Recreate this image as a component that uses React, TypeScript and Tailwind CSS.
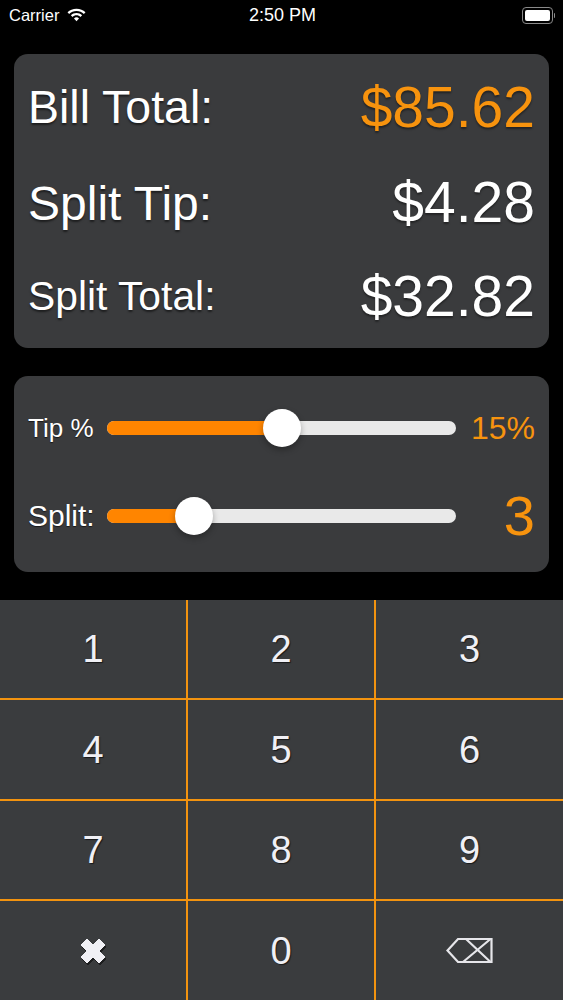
const FONT = "font-['Liberation_Sans',Arial,sans-serif]";

const totals = [
  { label: 'Bill Total:', value: '$85.62', labelSize: 'text-[46.5px]', orange: true, height: 'h-[96px]' },
  { label: 'Split Tip:', value: '$4.28', labelSize: 'mt-[3px] text-[48px]', orange: false, height: 'h-[94px]' },
  { label: 'Split Total:', value: '$32.82', labelSize: 'text-[40.8px]', orange: false, height: 'h-[94px]' },
];

const keys = ['1', '2', '3', '4', '5', '6', '7', '8', '9'];

const KEY_TEXT = 'flex items-center justify-center bg-[#3a3c3e] pt-[1px] text-[38px] text-[#f0f0f5] [text-shadow:1px_1px_1px_rgba(0,0,0,0.6)]';

function WifiIcon() {
  return (
    <svg width="19" height="14" viewBox="0 0 18 13" fill="#fff">
      <path d="M9 0.5C5.6 0.5 2.6 1.8 0.5 3.9L2 5.5C3.8 3.7 6.3 2.7 9 2.7C11.7 2.7 14.2 3.7 16 5.5L17.5 3.9C15.4 1.8 12.4 0.5 9 0.5Z" />
      <path d="M9 4.6C7 4.6 5.1 5.4 3.7 6.8L5.2 8.4C6.2 7.4 7.5 6.8 9 6.8C10.5 6.8 11.8 7.4 12.8 8.4L14.3 6.8C12.9 5.4 11 4.6 9 4.6Z" />
      <path d="M9 8.6C8.1 8.6 7.2 9 6.6 9.7L9 12.5L11.4 9.7C10.8 9 9.9 8.6 9 8.6Z" />
    </svg>
  );
}

function StatusBar() {
  return (
    <div className="relative flex h-[30px] shrink-0 items-center justify-between pl-[9px] pr-[8px] text-white">
      <div className="flex items-center gap-[8px]">
        <span className="text-[16.5px]">Carrier</span>
        <WifiIcon />
      </div>
      <span className="absolute left-[2px] right-0 text-center text-[18px]">2:50 PM</span>
      <div className="flex items-center gap-[1px]">
        <div className="h-[17px] w-[31px] rounded-[4px] border border-[#8a8a8a] p-[2px]">
          <div className="h-full w-full rounded-[2px] bg-white" />
        </div>
        <div className="h-[5px] w-[1.5px] rounded-r-full bg-[#8a8a8a]" />
      </div>
    </div>
  );
}

function SliderRow({ label, value, percent, labelClass, valueClass }: { label: string; value: string; percent: number; labelClass: string; valueClass: string }) {
  return (
    <div className="flex h-[88px] items-center">
      <span className={`w-[79px] whitespace-nowrap leading-none text-white [text-shadow:0_1px_1px_rgba(0,0,0,0.6)] ${labelClass}`}>{label}</span>
      <div className="relative h-[14px] w-[349px] rounded-full bg-[#e9e9e9]">
        <div className="h-full rounded-full bg-[#ff8500]" style={{ width: `${percent}%` }} />
        <div
          className="absolute top-1/2 h-[38px] w-[38px] -translate-x-1/2 -translate-y-1/2 rounded-full bg-white shadow-[0_3px_6px_rgba(0,0,0,0.3)]"
          style={{ left: `${percent}%` }}
        />
      </div>
      <span className={`flex-1 text-right leading-none text-[#f7930e] ${valueClass}`}>{value}</span>
    </div>
  );
}

export default function App() {
  return (
    <div className={`flex h-[1000px] w-[563px] flex-col overflow-hidden bg-black ${FONT}`}>
      <StatusBar />

      <div className="mx-[14px] mt-[24px] flex h-[294px] shrink-0 flex-col justify-center rounded-[14px] bg-[#3a3b3d] px-[14px]">
        {totals.map((row) => (
          <div key={row.label} className={`flex items-center justify-between ${row.height}`}>
            <span className={`${row.labelSize} leading-none text-white [text-shadow:0_2px_2px_rgba(0,0,0,0.5)]`}>{row.label}</span>
            <span className={`text-[57px] leading-none [text-shadow:0_2px_2px_rgba(0,0,0,0.4)] ${row.orange ? 'text-[#f7930e]' : 'text-white'}`}>
              {row.value}
            </span>
          </div>
        ))}
      </div>

      <div className="mx-[14px] mt-[28px] flex h-[196px] shrink-0 flex-col justify-center rounded-[14px] bg-[#3a3b3d] px-[14px] pb-[4px]">
        <SliderRow label="Tip %" value="15%" percent={50} labelClass="text-[26px]" valueClass="text-[32px]" />
        <SliderRow label="Split:" value="3" percent={25} labelClass="text-[30px]" valueClass="text-[56px]" />
      </div>

      <div className="mt-[28px] grid h-[400px] shrink-0 grid-cols-[186px_186px_187px] grid-rows-[98px_99px_98px_99px] gap-[2px] bg-[#f2930f]">
        {keys.map((key) => (
          <button key={key} className={KEY_TEXT}>
            {key}
          </button>
        ))}
        <button className="flex items-center justify-center bg-[#3a3c3e]">
          <svg width="28" height="28" viewBox="0 0 28 28" className="drop-shadow-[1px_2px_0_rgba(0,0,0,0.5)]">
            <path d="M2 8L8 2L14 8L20 2L26 8L20 14L26 20L20 26L14 20L8 26L2 20L8 14Z" fill="#f0f0f5" stroke="#f0f0f5" strokeWidth="1" strokeLinejoin="round" />
          </svg>
        </button>
        <button className={KEY_TEXT}>0</button>
        <button className="flex items-center justify-center bg-[#3a3c3e]">
          <svg width="47" height="27" viewBox="0 0 47 27" fill="none" stroke="#e6e6ea" strokeWidth="2.2" strokeLinejoin="miter">
            <path d="M1.5 13.5L12 2H45.5V25H12Z" />
            <path d="M17 25L44.5 2M20 2L44.5 25" />
          </svg>
        </button>
      </div>
    </div>
  );
}
